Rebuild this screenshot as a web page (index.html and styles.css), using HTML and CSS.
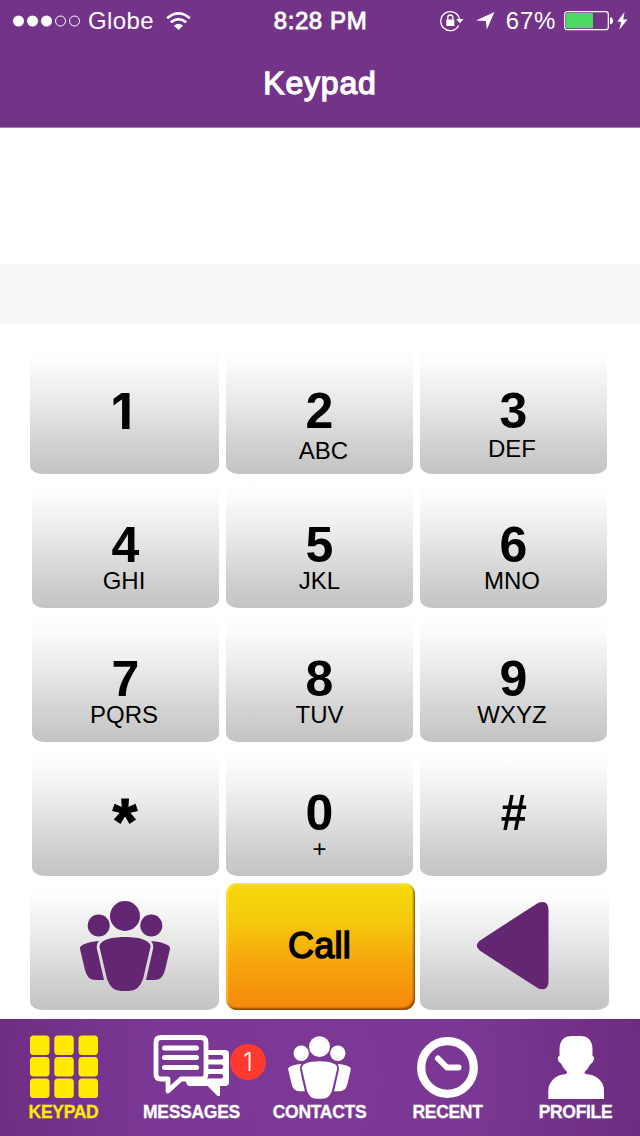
FILE: index.html
```
<!DOCTYPE html>
<html lang="en">
<head>
<meta charset="utf-8">
<title>Keypad</title>
<link rel="stylesheet" href="styles.css">
</head>
<body>
<svg class="symbols" aria-hidden="true">
  <symbol id="people" viewBox="0 0 92 92">
    <circle cx="46" cy="16" r="15"/>
    <circle cx="19.700" cy="25.500" r="11"/>
    <circle cx="72.300" cy="25.500" r="11"/>
    <path d="M20 41C8 42 0 45 1 49L6 70Q8 80 17 80H25L18 49Q17 44 20 41Z"/>
    <path d="M72 41C84 42 92 45 91 49L86 70Q84 80 75 80H67L74 49Q75 44 72 41Z"/>
    <path d="M46 37C62 37 72 41 71.500 47L64 79Q60 91 50 91H42Q32 91 28 79L20.500 47C20 41 30 37 46 37Z"/>
  </symbol>
</svg>
<div class="app">
  <header class="header">
    <div class="status">
      <div class="status-left">
        <svg class="signal" viewBox="0 0 68 12"><g fill="#fff"><circle cx="5.500" cy="6" r="5.500"/><circle cx="19.500" cy="6" r="5.500"/><circle cx="33.500" cy="6" r="5.500"/></g><g fill="none" stroke="#fff"><circle cx="47.500" cy="6" r="5"/><circle cx="61.500" cy="6" r="5"/></g></svg>
        <span class="carrier">Globe</span>
        <svg class="wifi" viewBox="0 0 25 19"><g fill="none" stroke="#fff" stroke-width="2.700"><path d="M1.200 6.200Q12.500-3.400 23.800 6.200"/><path d="M4.800 10.300Q12.500 4 20.200 10.300"/></g><path fill="#fff" d="M8 13.800Q12.500 9.800 17 13.800L12.500 18Z"/></svg>
      </div>
      <span class="time">8:28 PM</span>
      <div class="status-right">
        <svg class="lock" viewBox="0 0 24 22"><path d="M18.700 15.500A9.500 9.500 0 1 1 19.500 9" fill="none" stroke="#fff" stroke-width="1.300"/><path d="M16.200 9H23.500L19.900 13.200Z" fill="#fff"/><path d="M6.300 9.500H14.300V16H6.300Z" fill="#fff"/><path d="M7.800 10V7.500Q7.800 5 10.300 5T12.800 7.500V10" fill="none" stroke="#fff" stroke-width="1.300"/></svg>
        <svg class="arrow" viewBox="0 0 19 18"><path d="M18.500 0L10.800 17.500L9.800 9L0 8.400Z" fill="#fff"/></svg>
        <span class="percent">67%</span>
        <svg class="battery" viewBox="0 0 49 20"><rect x=".7" y=".7" width="43.600" height="18" rx="2.500" fill="none" stroke="#fff" stroke-width="1.200"/><rect x="2" y="2" width="27" height="15.300" rx="1" fill="#4cd964"/><path d="M46 6.200Q49 6.500 49 9.800T46 13.200Z" fill="#fff"/></svg>
        <svg class="bolt" viewBox="0 0 11 18"><path d="M7.500 0L.3 9.700H4.200L2.300 17.800L10.500 7.500H6.300Z" fill="#fff"/></svg>
      </div>
    </div>
    <h1 class="title">Keypad</h1>
  </header>
  <div class="display"></div>
  <div class="strip"></div>
  <main class="pad">
    <div class="row">
      <div class="key wide"><b class="digit one">1</b></div>
      <div class="key"><b class="digit">2</b><span class="letters abc">ABC</span></div>
      <div class="key"><b class="digit">3</b><span class="letters def">DEF</span></div>
    </div>
    <div class="row">
      <div class="key"><b class="digit">4</b><span class="letters first">GHI</span></div>
      <div class="key"><b class="digit">5</b><span class="letters">JKL</span></div>
      <div class="key"><b class="digit">6</b><span class="letters last">MNO</span></div>
    </div>
    <div class="row">
      <div class="key"><b class="digit">7</b><span class="letters first">PQRS</span></div>
      <div class="key"><b class="digit">8</b><span class="letters">TUV</span></div>
      <div class="key"><b class="digit">9</b><span class="letters last">WXYZ</span></div>
    </div>
    <div class="row">
      <div class="key"><b class="digit star">*</b></div>
      <div class="key"><b class="digit">0</b><span class="letters plus">+</span></div>
      <div class="key"><b class="digit hash">#</b></div>
    </div>
    <div class="row actions">
      <div class="key wide"><svg class="group"><use href="#people"/></svg></div>
      <div class="key call">Call</div>
      <div class="key wide"><svg class="back" viewBox="0 0 73 88"><path d="M60 2.200Q64-.8 68.500 .3Q72.500 2 72.500 8V79Q72.500 85.500 68.500 87Q64 88 60 85L4 48.800Q-2.500 43.500 4 38.500Z"/></svg></div>
    </div>
  </main>
  <nav class="tabs">
    <div class="tab active">
      <svg class="icon" viewBox="0 0 128 68"><g fill="#ffea00"><rect x="30" y="6.500" width="19.500" height="19.500" rx="3.500"/><rect x="54.300" y="6.500" width="19.500" height="19.500" rx="3.500"/><rect x="78.500" y="6.500" width="19.500" height="19.500" rx="3.500"/><rect x="30" y="28" width="19.500" height="19.500" rx="3.500"/><rect x="54.300" y="28" width="19.500" height="19.500" rx="3.500"/><rect x="78.500" y="28" width="19.500" height="19.500" rx="3.500"/><rect x="30" y="49.500" width="19.500" height="19.500" rx="3.500"/><rect x="54.300" y="49.500" width="19.500" height="19.500" rx="3.500"/><rect x="78.500" y="49.500" width="19.500" height="19.500" rx="3.500"/></g></svg>
      <span class="label">KEYPAD</span>
    </div>
    <div class="tab">
      <svg class="icon" viewBox="0 0 128 68"><path fill="#fff" d="M80 21H97Q101 21 101 25V53Q101 57 97 57H92V67H89.500L79.500 57H62Q58 57 58 51L80 49Z"/><path fill="none" stroke="#7a3894" stroke-width="4.500" stroke-linecap="round" d="M80 28.300H93M80 37.800H93M78 47.300H93"/><path d="M33 8.500H73Q78 8.500 78 13.500V45Q78 50 73 50H53L40 62V50H33Q28 50 28 45V13.500Q28 8.500 33 8.500Z" fill="#7a3894" stroke="#fff" stroke-width="4.800" stroke-linejoin="round"/><path fill="none" stroke="#fff" stroke-width="5" stroke-linecap="round" d="M36.500 19H68.500M36.500 28.500H68.500M36.500 38.500H68.500"/></svg>
      <span class="label">MESSAGES</span>
      <span class="badge">1</span>
    </div>
    <div class="tab">
      <svg class="icon" viewBox="0 0 128 68"><use href="#people" x="31.500" y="6.500" width="64" height="64" fill="#fff"/></svg>
      <span class="label">CONTACTS</span>
    </div>
    <div class="tab">
      <svg class="icon" viewBox="0 0 128 68"><g fill="none" stroke="#fff"><circle cx="63.500" cy="38.500" r="26.300" stroke-width="8.300"/><path d="M54 29.500L63 38.500H74.500" stroke-width="6" stroke-linecap="round" stroke-linejoin="round"/></g></svg>
      <span class="label">RECENT</span>
    </div>
    <div class="tab">
      <svg class="icon" viewBox="0 0 128 68"><path fill="#fff" d="M36.300 70V61C37 52 44 46.500 51 45.500Q55.500 45 55 43Q51 39 49 34.500Q45 32 46 28Q47 27 47.500 27V20Q48 7 60 7H68Q80 7 80.500 20V27Q82 27 82 30Q81 34 78.500 35Q76 40 72.500 43Q72 45 77 45.500C84 46.500 92 52 92 61V70Z"/></svg>
      <span class="label">PROFILE</span>
    </div>
  </nav>
</div>
</body>
</html>
```
FILE: styles.css
```
* { box-sizing: border-box; }
body {
  margin: 0;
  font-family: "Liberation Sans", Arial, sans-serif;
  background: #fff;
  color: #000;
}
.symbols { display: none; }
.app {
  width: 640px;
  height: 1136px;
  display: flex;
  flex-direction: column;
  overflow: hidden;
}
svg { display: block; flex: none; overflow: visible; }

.header {
  height: 128px;
  background: #733388;
  border-bottom: 1px solid #a086a9;
  color: #fff;
}
.status {
  height: 40px;
  display: grid;
  grid-template-columns: 1fr auto 1fr;
  align-items: center;
  padding: 1px 12px 0 13px;
  font-size: 24px;
  line-height: 40px;
}
.status-left, .status-right { display: flex; align-items: center; }
.status-right { justify-content: flex-end; }
.signal { width: 68px; height: 12px; }
.carrier { margin-left: 7px; letter-spacing: .4px; }
.wifi { width: 25px; height: 19px; margin-left: 12px; }
.time { letter-spacing: .6px; -webkit-text-stroke: .9px #fff; }
.lock { width: 24px; height: 22px; }
.arrow { width: 19px; height: 18px; margin-left: 12px; }
.percent { margin-left: 11px; letter-spacing: .7px; }
.battery { width: 49px; height: 20px; margin-left: 8px; }
.bolt { width: 11px; height: 18px; margin-left: 4px; }
.title {
  margin: 23px 0 0;
  text-align: center;
  font-size: 32px;
  font-weight: 400;
  line-height: 40px;
  letter-spacing: .8px;
  -webkit-text-stroke: 1.300px #fff;
}
.display { height: 136px; }
.strip { height: 60px; background: #f7f5f6; }

.pad {
  height: 695px;
  padding: 24px 0 0 30px;
  display: flex;
  flex-direction: column;
  gap: 8px;
}
.row {
  display: grid;
  grid-template-columns: 189px 187px 187px;
  column-gap: 7px;
}
.key {
  width: 187px;
  height: 126px;
  padding-top: 38px;
  border-radius: 0 0 12px 12px / 0 0 9px 9px;
  background: linear-gradient(#fff 0%, #fcfcfc 10%, #e9e9e9 43%, #cfcfcf 80%, #c4c4c4 100%);
  display: flex;
  flex-direction: column;
  align-items: center;
  justify-self: end;
}
.wide { width: 189px; }
.digit { font-size: 50px; line-height: 50px; }
.one { font-family: Inter, sans-serif; margin-right: 5px; }
.letters { font-size: 24px; line-height: 24px; margin-top: -1px; }
.abc { margin: 3px 0 0 8px; }
.def { margin: 1px 3px 0 0; }
.first { margin-right: 3px; }
.last { margin-right: 3px; }
.plus { margin-top: -1px; }
.star {
  font-size: 64px;
  line-height: 68px;
  margin-right: 1px;
  -webkit-text-stroke: 1px #000;
}
.hash { transform: scaleX(.94); }
.actions { justify-items: start; }
.actions .key { padding: 0; justify-content: center; justify-self: start; }
.actions .wide { padding-bottom: 2px; }
.group { width: 92px; height: 92px; fill: #622672; }
.back { width: 73px; height: 88px; margin-right: 4px; fill: #622672; }
.actions .call {
  width: 189px;
  height: 127px;
  margin-top: -1px;
  border-radius: 11px;
  background: linear-gradient(#f4da0b 0%, #f5cb0c 28%, #f6a50d 63%, #f5880b 100%);
  box-shadow: inset -1.500px -2px 2px rgba(100, 45, 0, .7), inset 2px 2px 2px rgba(255, 245, 120, .4);
  padding: 0 2px 2px 0;
  font-size: 36px;
  letter-spacing: .3px;
  -webkit-text-stroke: 1.500px #000;
}

.tabs {
  height: 117px;
  display: grid;
  grid-template-columns: repeat(5, 128px);
  background: radial-gradient(ellipse 360px 420px at 310px 60px, #7b3995 0%, #7a3894 45%, #6b2b7c 100%);
  color: #fff;
}
.tab {
  position: relative;
  padding-top: 10px;
  display: flex;
  flex-direction: column;
  align-items: center;
}
.icon { width: 128px; height: 68px; }
.label {
  margin: 5px 1px 0 0;
  font-size: 17.500px;
  line-height: 20px;
  font-weight: 700;
  letter-spacing: -.3px;
  -webkit-text-stroke: .3px currentColor;
}
.active { color: #ffea00; }
.badge {
  position: absolute;
  left: 102px;
  top: 25px;
  width: 36px;
  height: 36px;
  border-radius: 50%;
  background: #ff3b30;
  font: 300 25px/36px Inter, sans-serif;
  text-align: center;
  z-index: 1;
}
```
